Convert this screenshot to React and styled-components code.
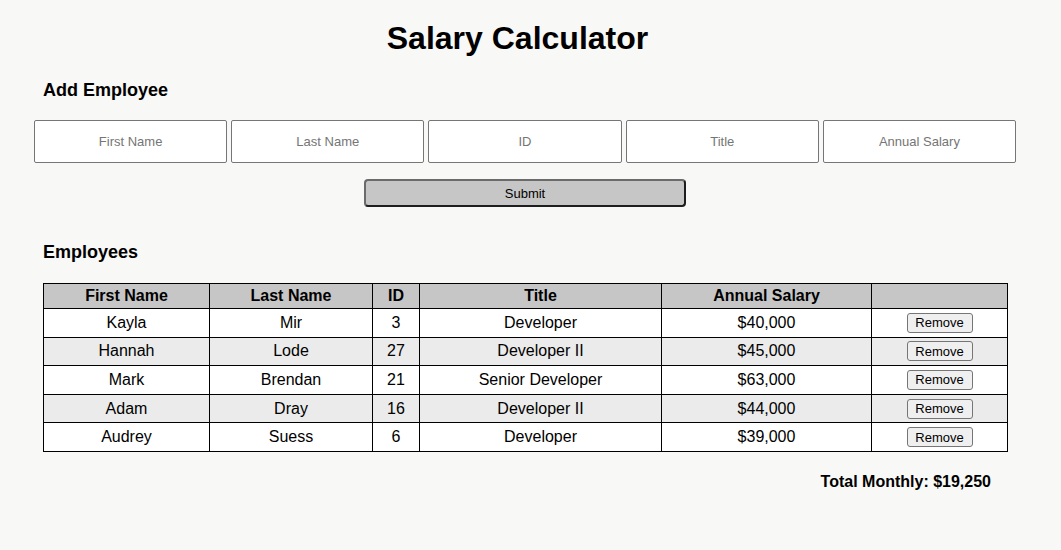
import React from "react";
import styled, { createGlobalStyle } from "styled-components";

const Global = createGlobalStyle`
  html, body { margin: 0; padding: 0; background: #f8f8f6; }
  body { font-family: "Liberation Sans", Arial, sans-serif; color: #000; }
`;

const Page = styled.div`
  width: 982px;
  padding: 20px 0 40px 34px;
  box-sizing: content-box;
`;

const Title = styled.h1`
  margin: 0 15px 0 0;
  font-size: 32px;
  line-height: 37px;
  font-weight: 700;
  text-align: center;
`;

const SectionHeading = styled.h3`
  margin: ${(p) => p.$mt}px 0 0 9px;
  font-size: 18px;
  line-height: 21px;
  font-weight: 700;
`;

const Form = styled.form`
  display: flex;
  flex-direction: column;
  align-items: center;
  margin-top: 19px;
`;

const InputRow = styled.div`
  display: flex;
  gap: 4px;
  width: 100%;
`;

const Input = styled.input`
  box-sizing: border-box;
  flex: 1 1 0;
  min-width: 0;
  height: 43px;
  border: 1px solid #767676;
  border-radius: 2px;
  background: #fff;
  font-family: "Liberation Sans", Arial, sans-serif;
  font-size: 13px;
  text-align: center;
  padding: 0;
  &::placeholder { color: #757575; }
`;

const Submit = styled.button`
  box-sizing: border-box;
  margin-top: 16px;
  width: 322px;
  height: 28px;
  background: #c6c6c6;
  border-style: solid;
  border-width: 2px;
  border-color: #6b6b6b #1e1e1e #1e1e1e #6b6b6b;
  border-radius: 4px;
  font-family: "Liberation Sans", Arial, sans-serif;
  font-size: 13px;
  color: #000;
  padding: 0;
`;

const Table = styled.table`
  margin: 20px 0 0 9px;
  width: 964px;
  border-collapse: collapse;
  font-size: 16px;
  table-layout: fixed;
`;

const Th = styled.th`
  background: #c6c6c6;
  border: 1px solid #000;
  height: 24px;
  padding: 0;
  font-weight: 700;
  line-height: 18px;
`;

const Tr = styled.tr`
  background: ${(p) => (p.$alt ? "#ebebeb" : "#fff")};
`;

const Td = styled.td`
  border: 1px solid #000;
  height: 27.6px;
  padding: 0;
  text-align: center;
  line-height: 18px;
`;

const RemoveButton = styled.button`
  box-sizing: border-box;
  width: 66px;
  height: 20px;
  padding: 0;
  background: #efefef;
  border: 1px solid #767676;
  border-radius: 3px;
  font-family: "Liberation Sans", Arial, sans-serif;
  font-size: 13px;
  color: #000;
  vertical-align: middle;
`;

const Total = styled.div`
  margin: 21px 25px 0 0;
  text-align: right;
  font-size: 16px;
  line-height: 18px;
  font-weight: 700;
`;

const employees = [
  ["Kayla", "Mir", "3", "Developer", "$40,000"],
  ["Hannah", "Lode", "27", "Developer II", "$45,000"],
  ["Mark", "Brendan", "21", "Senior Developer", "$63,000"],
  ["Adam", "Dray", "16", "Developer II", "$44,000"],
  ["Audrey", "Suess", "6", "Developer", "$39,000"],
];

const cols = [166, 163, 47, 242, 210, 136];

export default function App() {
  return (
    <>
      <Global />
      <Page>
        <Title>Salary Calculator</Title>
        <SectionHeading $mt={23}>Add Employee</SectionHeading>
        <Form onSubmit={(e) => e.preventDefault()}>
          <InputRow>
            <Input placeholder="First Name" />
            <Input placeholder="Last Name" />
            <Input placeholder="ID" />
            <Input placeholder="Title" />
            <Input placeholder="Annual Salary" />
          </InputRow>
          <Submit type="submit">Submit</Submit>
        </Form>
        <SectionHeading $mt={35}>Employees</SectionHeading>
        <Table>
          <colgroup>
            {cols.map((w, i) => (
              <col key={i} style={{ width: w }} />
            ))}
          </colgroup>
          <thead>
            <tr>
              <Th>First Name</Th>
              <Th>Last Name</Th>
              <Th>ID</Th>
              <Th>Title</Th>
              <Th>Annual Salary</Th>
              <Th />
            </tr>
          </thead>
          <tbody>
            {employees.map((e, i) => (
              <Tr key={i} $alt={i % 2 === 1}>
                {e.map((c, j) => (
                  <Td key={j}>{c}</Td>
                ))}
                <Td>
                  <RemoveButton type="button">Remove</RemoveButton>
                </Td>
              </Tr>
            ))}
          </tbody>
        </Table>
        <Total>Total Monthly: $19,250</Total>
      </Page>
    </>
  );
}
